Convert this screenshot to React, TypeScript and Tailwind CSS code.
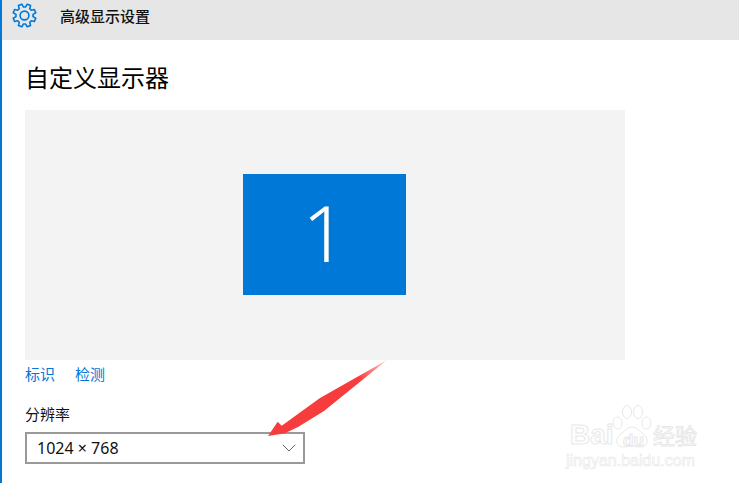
import { ChevronDown } from 'lucide-react';

const font = "font-['Noto_Sans','Noto_Sans_CJK_SC',sans-serif]";

// outline of an 8-tooth cog, centred on 12.5,12.5
function cogPath() {
  const pts: string[] = [];
  for (let i = 0; i < 8; i++) {
    const a = (i * Math.PI) / 4 + Math.PI / 8;
    const at = (r: number, d: number) => {
      const t = a + (d * Math.PI) / 180;
      return `${(12.5 + r * Math.cos(t)).toFixed(2)} ${(12.5 + r * Math.sin(t)).toFixed(2)}`;
    };
    pts.push(at(8.6, -15), at(11.6, -9), at(11.6, 9), at(8.6, 15));
  }
  return `M${pts.join(' L')} Z`;
}

function Gear() {
  return (
    <svg className="ml-[10px] mb-[9px]" width="25" height="25" viewBox="0 0 25 25" fill="none" stroke="#0078d7" strokeWidth="1.6">
      <path d={cogPath()} strokeLinejoin="round" />
      <circle cx="12.5" cy="12.5" r="4.4" />
    </svg>
  );
}

function Arrow() {
  return (
    <svg className="absolute left-[258px] top-[355px]" width="130" height="86" viewBox="0 0 130 86">
      <defs>
        <linearGradient id="tail" x1="127" y1="5" x2="100" y2="25" gradientUnits="userSpaceOnUse">
          <stop offset="0" stopColor="#f63c3c" stopOpacity="0.25" />
          <stop offset="1" stopColor="#f63c3c" />
        </linearGradient>
      </defs>
      <path
        d="M127 5 L60 43 L21.7 70.7 L17.7 66.7 L8 81 L25 78.3 L38 72 L64 56 Z"
        fill="url(#tail)"
      />
    </svg>
  );
}

function Watermark() {
  const outline = 'text-white [-webkit-text-stroke:1px_#e8e8e8]';
  return (
    <div className="absolute left-[564px] top-[402px] w-[160px] h-[72px]">
      <span className={`absolute left-[4px] top-[15px] text-[28px] leading-[36px] font-bold font-['Liberation_Sans',sans-serif] ${outline}`}>
        Bai
      </span>
      <span className={`absolute left-[57px] top-[29px] text-[17px] leading-[20px] font-bold font-['Liberation_Sans',sans-serif] ${outline}`}>
        du
      </span>
      <span className={`absolute left-[87px] top-[17px] text-[22px] leading-[30px] font-['Noto_Sans_CJK_SC',sans-serif] ${outline}`}>
        经验
      </span>
      <span className="absolute left-0 top-[49px] text-[16px] leading-[20px] font-['Liberation_Sans',sans-serif] text-white [-webkit-text-stroke:0.6px_#e8e8e8]">
        jingyan.baidu.com
      </span>
      <svg className="absolute left-[46px] top-0" width="42" height="48" viewBox="0 0 42 48" fill="none" stroke="#e8e8e8" strokeWidth="1">
        <ellipse cx="5.5" cy="21" rx="4.5" ry="6" />
        <ellipse cx="15" cy="10" rx="4.5" ry="6.5" />
        <ellipse cx="26" cy="10" rx="4.5" ry="6.5" />
        <ellipse cx="34.5" cy="21" rx="4.5" ry="6" />
        <path d="M20 25 C15 25 13 29 9 32 C3 36 3 45 12 45 C15 45 17 44 20 44 C23 44 25 45 28 45 C37 45 37 36 31 32 C27 29 25 25 20 25 Z" />
      </svg>
    </div>
  );
}

export default function App() {
  return (
    <div className={`relative w-[739px] h-[483px] bg-white border-l-2 border-[#0078d7] overflow-hidden ${font}`}>
      {/* Header */}
      <div className="flex items-center h-10 bg-[#e6e6e6]">
        <Gear />
        <span className="ml-[23px] mb-[7px] text-[15px] font-medium text-[#111]">高级显示设置</span>
      </div>

      <div className="pl-[23px]">
        <h1 className="mt-[20px] mb-[14px] text-[24px] leading-[36px] font-normal text-black">自定义显示器</h1>

        <div className="flex items-center justify-center w-[600px] h-[250px] bg-[#f3f3f3]">
          <div className="flex items-center justify-center w-[163px] h-[121px] mr-[1px] mb-[1px] bg-[#0078d7]">
            <span className="mb-[6px] text-[78px] leading-none font-light text-white">1</span>
          </div>
        </div>

        <div className="mt-[3px] flex gap-[20px] text-[15px] leading-[22px] text-[#0078d7]">
          <span>标识</span>
          <span>检测</span>
        </div>

        <div className="mt-[18px] text-[15px] leading-[22px] text-[#111]">分辨率</div>

        <div className="mt-[7px] flex items-center justify-between w-[280px] h-[32px] border-2 border-[#999] pl-[10px] pr-[2px] text-[16px] text-[#111]">
          <span>1024 × 768</span>
          <ChevronDown size={24} strokeWidth={1} className="text-[#666]" />
        </div>
      </div>

      <Arrow />
      <Watermark />
    </div>
  );
}
